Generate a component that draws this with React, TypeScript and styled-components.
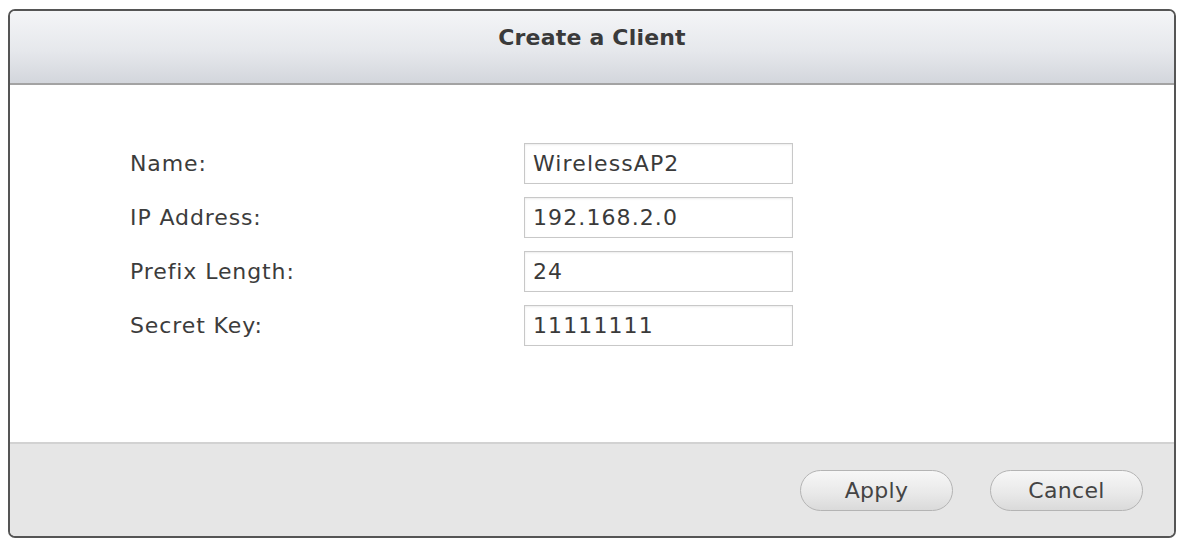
import React from "react";
import styled, { createGlobalStyle } from "styled-components";

const Global = createGlobalStyle`
  html, body { margin: 0; padding: 0; background: #ffffff; }
  body { font-family: "DejaVu Sans", Verdana, sans-serif; }
`;

const Dialog = styled.div`
  box-sizing: border-box;
  margin: 9px 0 0 8px;
  width: 1168px;
  height: 529px;
  border: 2px solid #555;
  border-radius: 7px;
  overflow: hidden;
  display: flex;
  flex-direction: column;
  background: #fff;
`;

const Header = styled.div`
  height: 74px;
  flex: none;
  display: flex;
  align-items: flex-start;
  justify-content: center;
  padding-top: 14px;
  box-sizing: border-box;
  background: linear-gradient(#f4f5f7, #e6e8ec 55%, #d3d6dc);
  border-bottom: 2px solid #a3a3a3;
`;

const Title = styled.div`
  font-size: 22px;
  font-weight: bold;
  color: #3a3a3a;
  letter-spacing: 0.2px;
`;

const Body = styled.div`
  flex: 1;
  padding: 58px 0 0 120px;
  display: flex;
  flex-direction: column;
  gap: 13px;
`;

const Row = styled.div`
  display: flex;
  align-items: center;
  height: 41px;
`;

const Label = styled.div`
  width: 394px;
  font-size: 22px;
  color: #3c3c3c;
  letter-spacing: 0.9px;
`;

const Field = styled.div`
  box-sizing: border-box;
  width: 269px;
  height: 41px;
  border: 1px solid #c8c8c8;
  box-shadow: inset 0 1px 2px rgba(0, 0, 0, 0.08);
  display: flex;
  align-items: center;
  padding-left: 8px;
  font-size: 22px;
  color: #3a3a3a;
  letter-spacing: 1.1px;
`;

const Footer = styled.div`
  height: 92px;
  flex: none;
  background: #e6e6e6;
  border-top: 2px solid #d2d2d2;
  display: flex;
  align-items: center;
  justify-content: flex-end;
  gap: 37px;
  padding-right: 31px;
`;

const Button = styled.div`
  box-sizing: border-box;
  width: 153px;
  height: 41px;
  border-radius: 21px;
  border: 1px solid #b4b4b4;
  background: linear-gradient(#f7f7f7, #e8e8e8 60%, #dadada);
  display: flex;
  align-items: center;
  justify-content: center;
  font-size: 22px;
  color: #444;
  letter-spacing: 0.3px;
`;

const fields = [
  ["Name:", "WirelessAP2"],
  ["IP Address:", "192.168.2.0"],
  ["Prefix Length:", "24"],
  ["Secret Key:", "11111111"],
];

export default function App() {
  return (
    <>
      <Global />
      <Dialog>
        <Header>
          <Title>Create a Client</Title>
        </Header>
        <Body>
          {fields.map(([l, v]) => (
            <Row key={l}>
              <Label>{l}</Label>
              <Field>{v}</Field>
            </Row>
          ))}
        </Body>
        <Footer>
          <Button>Apply</Button>
          <Button>Cancel</Button>
        </Footer>
      </Dialog>
    </>
  );
}
